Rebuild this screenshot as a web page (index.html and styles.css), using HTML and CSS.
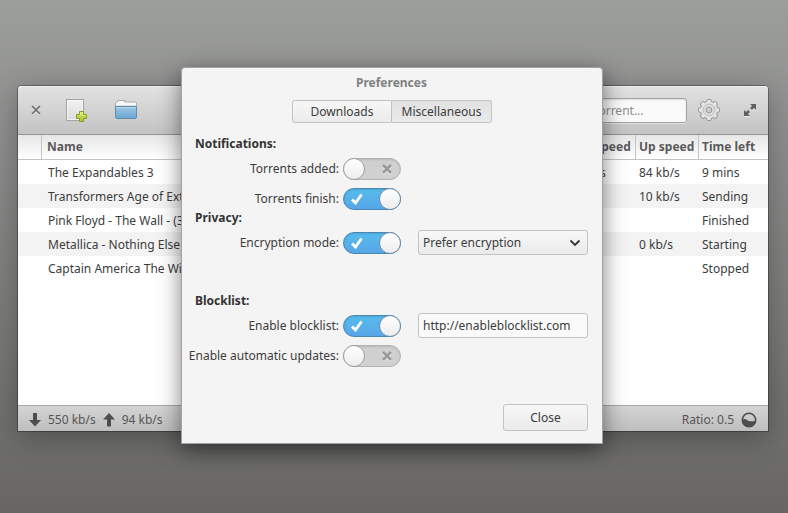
FILE: index.html
```html
<!DOCTYPE html>
<html lang="en">
<head>
<meta charset="utf-8">
<title>Torrents</title>
<link rel="stylesheet" href="styles.css">
</head>
<body>
<main class="window">
  <header class="toolbar">
    <button class="tool tool-close" aria-label="Close window">
      <svg width="10" height="10" viewBox="0 0 10 10"><path d="M1 2l8 8M9 2l-8 8" fill="none" stroke="#f0f0f0" stroke-width="1.500"/><path d="M1 1l8 8M9 1l-8 8" fill="none" stroke="#6c6c6c" stroke-width="1.700"/></svg>
    </button>
    <button class="tool tool-add" aria-label="Add torrent">
      <svg width="24" height="26" viewBox="0 0 24 26">
        <defs>
          <linearGradient id="paper" x1="0" y1="0" x2="0" y2="1"><stop offset="0" stop-color="#f2f2f2"/><stop offset="1" stop-color="#dcdcdc"/></linearGradient>
          <linearGradient id="plus" x1="0" y1="0" x2="0" y2="1"><stop offset="0" stop-color="#d6e85c"/><stop offset="1" stop-color="#a3c52f"/></linearGradient>
        </defs>
        <rect x="1.500" y="2.500" width="17" height="21" fill="url(#paper)" stroke="#a3a3a3"/>
        <rect x="2.500" y="3.500" width="15" height="19" fill="none" stroke="#fff" stroke-opacity=".6"/>
        <path d="M14.500 14.500h4v3h3v4h-3v3h-4v-3h-3v-4h3z" fill="url(#plus)" stroke="#83a02b" stroke-linejoin="round"/>
        <path d="M15.500 18.500v-3h2v3h3" fill="none" stroke="#eef7a0" stroke-opacity=".7"/>
      </svg>
    </button>
    <button class="tool tool-open" aria-label="Open folder">
      <svg width="24" height="22" viewBox="0 0 24 22">
        <defs><linearGradient id="folder" x1="0" y1="0" x2="0" y2="1"><stop offset="0" stop-color="#9fcae6"/><stop offset="1" stop-color="#6aa5cf"/></linearGradient></defs>
        <path d="M1.500 18V4l1-1h1V1.500h7V3h11l1 1v14z" fill="#f8f8f6" stroke="#adadab"/>
        <path d="M1.500 7.500h21v11l-1 1h-19l-1-1z" fill="url(#folder)" stroke="#5f8cab"/>
        <path d="M2 6.500h20" stroke="#dfe3e5"/>
        <path d="M2.500 8.500h19" stroke="#c8e1f1" stroke-opacity=".7"/>
      </svg>
    </button>
    <input class="search" type="search" placeholder="Search torrent..." aria-label="Search torrent">
    <button class="tool tool-gear" aria-label="Settings">
      <svg width="24" height="24" viewBox="0 0 24 24">
        <g fill="none">
          <circle cx="12" cy="12" r="8.500" fill="#e8e8e8" stroke="#999"/>
          <g fill="#e8e8e8" stroke="#999">
            <path id="tooth" d="M9.500 4.200L10 1.800q2-.9 4 0l.5 2.400"/>
            <path d="M9.500 4.200L10 1.800q2-.9 4 0l.5 2.400" transform="rotate(45 12 12)"/>
            <path d="M9.500 4.200L10 1.800q2-.9 4 0l.5 2.400" transform="rotate(90 12 12)"/>
            <path d="M9.500 4.200L10 1.800q2-.9 4 0l.5 2.400" transform="rotate(135 12 12)"/>
            <path d="M9.500 4.200L10 1.800q2-.9 4 0l.5 2.400" transform="rotate(180 12 12)"/>
            <path d="M9.500 4.200L10 1.800q2-.9 4 0l.5 2.400" transform="rotate(225 12 12)"/>
            <path d="M9.500 4.200L10 1.800q2-.9 4 0l.5 2.400" transform="rotate(270 12 12)"/>
            <path d="M9.500 4.200L10 1.800q2-.9 4 0l.5 2.400" transform="rotate(315 12 12)"/>
          </g>
          <circle cx="12" cy="12" r="7.900" fill="#e8e8e8"/>
          <circle cx="12" cy="12" r="6" fill="#dadada" stroke="#bcbcbc"/>
          <circle cx="12" cy="12" r="2.800" fill="#cfcfcf" stroke="#999"/>
        </g>
      </svg>
    </button>
    <button class="tool tool-expand" aria-label="Maximize">
      <svg width="14" height="14" viewBox="0 0 14 14">
        <path d="M7 2h6v6l-2-2-2 2-2-2 2-2zM1 8l2 2 2-2 2 2-2 2 2 2H1z" fill="#fff" fill-opacity=".6"/>
        <path d="M7 1h6v6l-2-2-2 2-2-2 2-2zM1 7l2 2 2-2 2 2-2 2 2 2H1z" fill="#606060"/>
      </svg>
    </button>
  </header>

  <div class="list">
    <table class="torrents">
      <colgroup><col class="col-mark"><col><col class="col-down"><col class="col-up"><col class="col-time"></colgroup>
      <thead>
        <tr><th></th><th>Name</th><th>Down speed</th><th>Up speed</th><th>Time left</th></tr>
      </thead>
      <tbody>
        <tr><td></td><td>The Expandables 3</td><td>550 kb/s</td><td>84 kb/s</td><td>9 mins</td></tr>
        <tr><td></td><td>Transformers Age of Extinction</td><td></td><td>10 kb/s</td><td>Sending</td></tr>
        <tr><td></td><td>Pink Floyd - The Wall - (3)</td><td></td><td></td><td>Finished</td></tr>
        <tr><td></td><td>Metallica - Nothing Else Matters</td><td></td><td>0 kb/s</td><td>Starting</td></tr>
        <tr><td></td><td>Captain America The Winter Soldier</td><td></td><td></td><td>Stopped</td></tr>
      </tbody>
    </table>
  </div>

  <footer class="status">
    <svg width="12" height="14" viewBox="0 0 12 14"><path d="M4 0h4v7h4l-6 6.500L0 7h4z" fill="#4d4d4d"/></svg>
    <span>550 kb/s</span>
    <svg width="12" height="14" viewBox="0 0 12 14"><path d="M4 13.500h4v-7h4L6 0 0 6.500h4z" fill="#4d4d4d"/></svg>
    <span>94 kb/s</span>
    <span class="ratio">Ratio: 0.5</span>
    <svg width="16" height="16" viewBox="0 0 16 16">
      <circle cx="8" cy="8" r="6.700" fill="none" stroke="#4d4d4d" stroke-width="1.600"/>
      <path d="M1 8c2-1.300 3.500-1.300 5 0s4 2 9 .5C15 12 12 15 8 15S1 12 1 8z" fill="#4d4d4d"/>
    </svg>
  </footer>
</main>

<div class="overlay">
  <form class="dialog" role="dialog" aria-labelledby="dialog-title">
    <h1 class="title" id="dialog-title">Preferences</h1>
    <div class="tabs">
      <button type="button" class="tab">Downloads</button>
      <button type="button" class="tab active">Miscellaneous</button>
    </div>

    <section class="group">
      <h2>Notifications:</h2>
      <div class="row">
        <label for="added">Torrents added:</label>
        <span class="switch"><input type="checkbox" id="added"><svg class="cross" width="12" height="12" viewBox="0 0 12 12"><path d="M2 3l8 8M10 3l-8 8" stroke="#f2f2f2"/><path d="M2 2l8 8M10 2l-8 8" stroke="#999"/></svg></span>
      </div>
      <div class="row">
        <label for="finish">Torrents finish:</label>
        <span class="switch"><input type="checkbox" id="finish" checked><svg class="tick" width="12" height="12" viewBox="0 0 12 12"><path d="M1 6.500l3.500 3.500 6-8.500"/></svg></span>
      </div>
    </section>

    <section class="group privacy">
      <h2>Privacy:</h2>
      <div class="row">
        <label for="encryption">Encryption mode:</label>
        <span class="switch"><input type="checkbox" id="encryption" checked><svg class="tick" width="12" height="12" viewBox="0 0 12 12"><path d="M1 6.500l3.500 3.500 6-8.500"/></svg></span>
        <span class="picker">
          <select class="field" aria-label="Encryption preference"><option>Prefer encryption</option></select>
          <svg class="chevron" width="12" height="8" viewBox="0 0 12 8"><path d="M1.500 1.500L6 6l4.500-4.500" fill="none" stroke="#333" stroke-width="1.800"/></svg>
        </span>
      </div>
    </section>

    <section class="group">
      <h2>Blocklist:</h2>
      <div class="row">
        <label for="blocklist">Enable blocklist:</label>
        <span class="switch"><input type="checkbox" id="blocklist" checked><svg class="tick" width="12" height="12" viewBox="0 0 12 12"><path d="M1 6.500l3.500 3.500 6-8.500"/></svg></span>
        <input class="field" type="text" value="http://enableblocklist.com" aria-label="Blocklist address">
      </div>
      <div class="row">
        <label for="updates">Enable automatic updates:</label>
        <span class="switch"><input type="checkbox" id="updates"><svg class="cross" width="12" height="12" viewBox="0 0 12 12"><path d="M2 3l8 8M10 3l-8 8" stroke="#f2f2f2"/><path d="M2 2l8 8M10 2l-8 8" stroke="#999"/></svg></span>
      </div>
    </section>

    <div class="actions"><button type="button" class="close">Close</button></div>
  </form>
</div>
</body>
</html>
```
FILE: styles.css
```css
*,
*::before {
  box-sizing: border-box;
}

body {
  margin: 0;
  min-height: 100vh;
  display: flex;
  padding: 86px 20px 82px 18px;
  background: linear-gradient(#9c9e9c, #676665);
  color: #3c3c3c;
  font: 12px/16px "Noto Sans", "Open Sans", sans-serif;
}

button,
input,
select {
  margin: 0;
  font: inherit;
  color: inherit;
}

svg {
  display: block;
  flex: none;
}

/* Main window */
.window {
  flex: 1;
  display: flex;
  flex-direction: column;
  min-width: 0;
  border-radius: 4px 4px 0 0;
  background: #fff;
  box-shadow: 0 0 0 1px rgba(0, 0, 0, .3), 0 6px 30px rgba(0, 0, 0, .3);
}

.toolbar {
  display: flex;
  align-items: center;
  height: 49px;
  padding: 0 11px 0 13px;
  border-bottom: 1px solid #969696;
  border-radius: 4px 4px 0 0;
  background: linear-gradient(#e2e2e2, #c3c3c3);
  box-shadow: inset 0 1px #f0f0f0;
}

.tool {
  display: flex;
  padding: 0;
  border: 0;
  background: none;
}

.tool-add {
  margin-left: 24px;
}

.tool-open {
  margin-left: 25px;
}

.search {
  width: 168px;
  height: 25px;
  margin-left: auto;
  padding: 0 0 0 33px;
  border: 1px solid #a3a3a3;
  border-radius: 3px;
  background: #fafafa;
  box-shadow: inset 0 1px 2px rgba(0, 0, 0, .12), 0 1px rgba(255, 255, 255, .4);
  appearance: none;
}

.search::placeholder {
  color: #8c8c8c;
}

.tool-gear {
  margin-left: 10px;
}

.tool-expand {
  margin-left: 22px;
}

.list {
  flex: 1;
}

.torrents {
  width: 100%;
  table-layout: fixed;
  border-collapse: separate;
  border-spacing: 0;
}

.col-mark {
  width: 24px;
}

.col-down {
  width: 78px;
}

.col-up {
  width: 63px;
}

.col-time {
  width: 69px;
}

th,
td {
  padding: 0 0 0 3px;
  overflow: hidden;
  white-space: nowrap;
  text-align: left;
}

th {
  height: 25px;
  border-right: 1px solid #c4c4c4;
  border-bottom: 1px solid #c4c4c4;
  background: linear-gradient(#e6e6e6, #fff);
  color: #5a5a5a;
  font-weight: 700;
}

th:nth-child(2) {
  padding-left: 5px;
}

th:nth-child(3),
td:nth-child(3) {
  padding-left: 0;
}

th:last-child {
  border-right: 0;
}

td {
  height: 24px;
  padding-top: 2px;
}

td:nth-child(2) {
  padding-left: 6px;
}

tbody tr:nth-child(even) {
  background: #f3f3f3;
}

.status {
  display: flex;
  align-items: center;
  gap: 7px;
  height: 26px;
  padding: 2px 11px 0;
  border-top: 1px solid #a8a8a8;
  background: linear-gradient(#d4d4d4, #bebebe);
  color: #555;
}

.status .ratio {
  margin-left: auto;
}

/* Preferences dialog */
.overlay {
  position: absolute;
  inset: 0;
  display: grid;
  place-items: center;
  padding: 0 4px 2px 0;
}

.dialog {
  width: 422px;
  padding: 5px 14px 12px 0;
  border: 1px solid #a2a2a2;
  border-radius: 4px 4px 0 0;
  background: #f4f4f4;
  box-shadow: 0 6px 22px rgba(0, 0, 0, .5);
}

.title {
  margin: 0 0 7px;
  padding-left: 13px;
  color: #808080;
  font-size: 12px;
  line-height: 20px;
  text-align: center;
}

.tabs {
  display: grid;
  grid-template-columns: 1fr 1fr;
  width: 200px;
  margin: 0 0 14px 110px;
}

.tab,
.field,
.close {
  border: 1px solid #c3c3c3;
  border-radius: 3px;
  background: linear-gradient(#f7f7f7, #ebebeb);
}

.tab {
  height: 23px;
  padding: 0;
  border-radius: 3px 0 0 3px;
}

.tab.active {
  border-left: 0;
  border-radius: 0 3px 3px 0;
  background: linear-gradient(#e2e2e2, #e9e9e9);
}

.group h2 {
  margin: 0 0 5px 13px;
  color: #333;
  font-size: 12px;
  line-height: 14px;
}

.privacy {
  margin-bottom: 39px;
}

.row {
  display: grid;
  grid-template-columns: 144px 58px 170px;
  column-gap: 17px;
  align-items: center;
  height: 25px;
}

.row + .row {
  margin-top: 5px;
}

.row label {
  margin-right: -13px;
  margin-left: -13px;
  text-align: right;
  white-space: nowrap;
}

.switch {
  display: flex;
  position: relative;
}

.switch input {
  width: 58px;
  height: 22px;
  border: 1px solid #b3b3b3;
  border-radius: 11px;
  background: #d0d0d0;
  box-shadow: inset 0 1px 2px rgba(0, 0, 0, .12);
  appearance: none;
}

.switch input::before {
  content: "";
  display: block;
  width: 22px;
  height: 22px;
  margin: -1px;
  border: 1px solid #a0a0a0;
  border-radius: 50%;
  background: linear-gradient(#fff, #ededed);
}

.switch input:checked {
  border-color: #4a86b4;
  background: linear-gradient(#56bcec, #58a6e8);
}

.switch input:checked::before {
  margin-left: 35px;
  border-color: #6f8ea8;
}

.tick,
.cross {
  position: absolute;
  top: 5px;
  fill: none;
  pointer-events: none;
}

.tick {
  left: 8px;
  stroke: #fff;
  stroke-width: 2.800;
}

.cross {
  right: 8px;
  stroke-width: 2.600;
}

.field {
  width: 100%;
  height: 25px;
  padding: 0 4px;
  appearance: none;
}

input.field {
  background: #fafafa;
}

.picker {
  display: flex;
  position: relative;
}

.chevron {
  position: absolute;
  top: 9px;
  right: 7px;
  pointer-events: none;
}

.actions {
  display: flex;
  justify-content: flex-end;
  margin-top: 36px;
}

.close {
  width: 85px;
  height: 27px;
}
```
